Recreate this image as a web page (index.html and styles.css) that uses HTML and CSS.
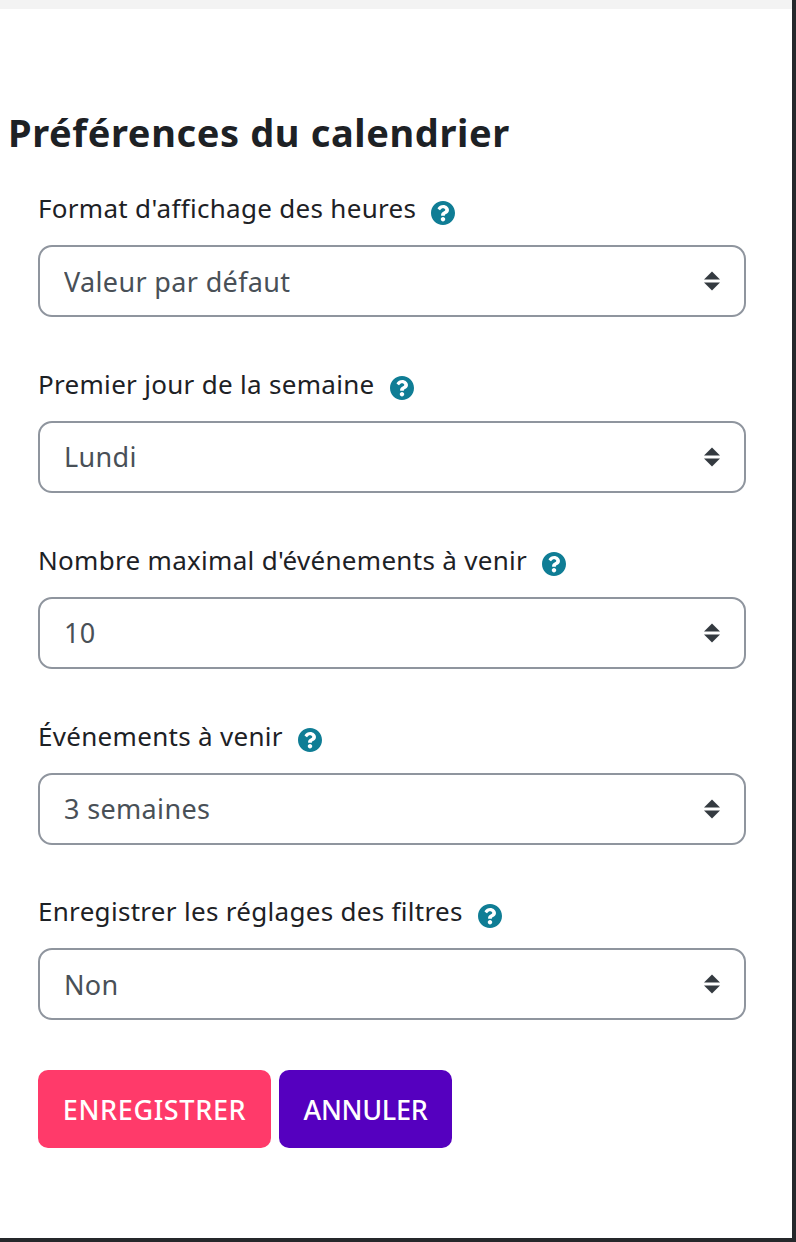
FILE: index.html
```html
<!DOCTYPE html>
<html lang="fr">
<head>
<meta charset="utf-8">
<title>Préférences du calendrier</title>
<link rel="stylesheet" href="styles.css">
</head>
<body>
<svg class="defs" width="0" height="0" aria-hidden="true">
  <symbol id="help" viewBox="8 8 496 496"><path d="M504 256c0 136.997-111.043 248-248 248S8 392.997 8 256C8 119.083 119.043 8 256 8s248 111.083 248 248zM262.655 90c-54.497 0-89.255 22.957-116.549 63.758-3.536 5.286-2.353 12.415 2.715 16.258l34.699 26.31c5.205 3.947 12.621 3.008 16.665-2.122 17.864-22.658 30.113-35.797 57.303-35.797 20.429 0 45.698 13.148 45.698 32.958 0 14.976-12.363 22.667-32.534 33.976C247.128 238.528 216 254.941 216 296v4c0 6.627 5.373 12 12 12h56c6.627 0 12-5.373 12-12v-1.333c0-28.462 83.186-29.647 83.186-106.667 0-58.002-60.165-102-116.531-102zM256 338c-25.365 0-46 20.635-46 46 0 25.364 20.635 46 46 46s46-20.636 46-46c0-25.365-20.635-46-46-46z"/></symbol>
  <symbol id="updown" viewBox="0 0 18 20"><path d="M9 0.5 17 8.5H1zM1 11.5H17L9 19.5z"/></symbol>
</svg>
<div class="frame">
  <div class="topband"></div>
  <main class="page">
    <h1 class="title">Préférences du calendrier</h1>
    <form class="form">
      <div class="field">
        <label class="label" for="f1"><span>Format d'affichage des heures</span><svg class="help"><use href="#help"/></svg></label>
        <div class="select-wrap">
          <select class="select" id="f1"><option>Valeur par défaut</option></select>
          <svg class="arrows"><use href="#updown"/></svg>
        </div>
      </div>
      <div class="field">
        <label class="label" for="f2"><span>Premier jour de la semaine</span><svg class="help"><use href="#help"/></svg></label>
        <div class="select-wrap">
          <select class="select" id="f2"><option>Lundi</option></select>
          <svg class="arrows"><use href="#updown"/></svg>
        </div>
      </div>
      <div class="field">
        <label class="label" for="f3"><span>Nombre maximal d'événements à venir</span><svg class="help"><use href="#help"/></svg></label>
        <div class="select-wrap">
          <select class="select" id="f3"><option>10</option></select>
          <svg class="arrows"><use href="#updown"/></svg>
        </div>
      </div>
      <div class="field">
        <label class="label" for="f4"><span>Événements à venir</span><svg class="help"><use href="#help"/></svg></label>
        <div class="select-wrap">
          <select class="select" id="f4"><option>3 semaines</option></select>
          <svg class="arrows"><use href="#updown"/></svg>
        </div>
      </div>
      <div class="field">
        <label class="label" for="f5"><span>Enregistrer les réglages des filtres</span><svg class="help"><use href="#help"/></svg></label>
        <div class="select-wrap">
          <select class="select" id="f5"><option>Non</option></select>
          <svg class="arrows"><use href="#updown"/></svg>
        </div>
      </div>
      <div class="actions">
        <button type="button" class="btn btn-save">ENREGISTRER</button>
        <button type="button" class="btn btn-cancel">ANNULER</button>
      </div>
    </form>
  </main>
</div>
</body>
</html>
```
FILE: styles.css
```css
* { box-sizing: border-box; }
html, body { margin: 0; padding: 0; height: 100%; background: #25282b; }
.defs { position: absolute; }
.frame {
  width: 792px;
  height: 1238px;
  background: #fff;
  overflow: hidden;
  font-family: "Noto Sans", "Open Sans", sans-serif;
  color: #1d2125;
}
.topband { height: 9px; background: #f3f3f3; }
.page { padding: 96px 46px 0 8px; }
.title {
  margin: 0 0 30.2px;
  font-size: 38px;
  line-height: 54px;
  font-weight: 700;
  letter-spacing: 0.62px;
  color: #1d2125;
}
.form { padding-left: 30px; display: flex; flex-direction: column; }
.field { height: 175.8px; }
.label {
  display: flex;
  align-items: center;
  height: 39px;
  margin-bottom: 17px;
  font-size: 26px;
  line-height: 39px;
  letter-spacing: 0.3px;
  white-space: nowrap;
}
.help { width: 24px; height: 24px; margin-left: 15px; margin-top: 8px; fill: #0f7d95; flex: none; }
.select-wrap { position: relative; }
.select {
  display: block;
  width: 100%;
  height: 72px;
  padding: 0 60px 0 24px;
  border: 2px solid #8f959e;
  border-radius: 14px;
  background: #fff;
  appearance: none;
  -webkit-appearance: none;
  font: inherit;
  font-size: 27px;
  letter-spacing: 0.35px;
  color: #495057;
}
.arrows {
  position: absolute;
  right: 25px;
  top: 26px;
  width: 18px;
  height: 20px;
  fill: #343a40;
  pointer-events: none;
}
.actions { display: flex; gap: 8px; margin-top: 2px; }
.btn {
  height: 78px;
  border: 0;
  border-radius: 10px;
  padding: 0;
  font: inherit;
  font-size: 27px;
  font-weight: 500;
  color: #fff;
}
.btn-save { background: #ff3a6a; width: 233px; letter-spacing: 0.65px; }
.btn-cancel { background: #5500bf; width: 173px; letter-spacing: -0.3px; }
```
